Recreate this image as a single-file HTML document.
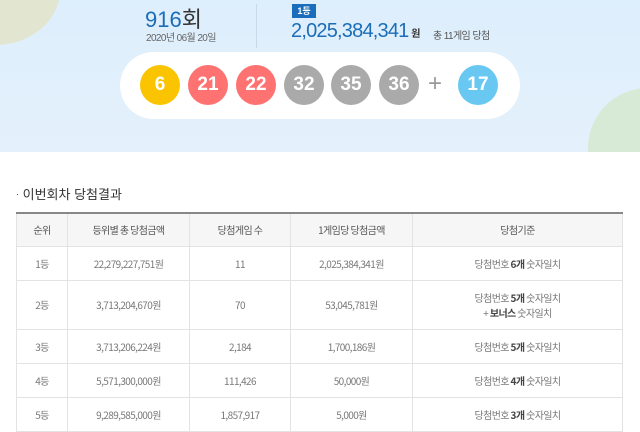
<!DOCTYPE html>
<html><head><meta charset="utf-8"><style>
*{margin:0;padding:0;box-sizing:border-box}
body{width:640px;height:428px;overflow:hidden;background:#fff;font-family:"Liberation Sans","Noto Sans CJK KR",sans-serif;position:relative}
.top{position:absolute;left:0;top:0;width:640px;height:152px;background:linear-gradient(#ddeefc,#e4f1fc);overflow:hidden}
.c1{position:absolute;left:-70px;top:-65px;width:130px;height:110px;border-radius:50%;background:#e2e5cf}
.c2{position:absolute;left:-40px;top:160px;width:55px;height:120px;border-radius:50%;background:#e2e5cf}
.c3{position:absolute;left:588px;top:88px;width:120px;height:120px;border-radius:50%;background:#d6ead6}
.abs{position:absolute;white-space:nowrap}
.ball{position:absolute;top:65px;width:40px;height:40px;border-radius:50%;color:#fff;font-weight:bold;font-size:19px;text-align:center;line-height:40px}
table{position:absolute;left:16px;top:212px;width:607px;border-collapse:collapse;font-size:10px;color:#777;letter-spacing:-0.6px;font-family:"Noto Sans CJK KR",sans-serif}
td,th{border:1px solid #e3e3e3;text-align:center;font-weight:normal;vertical-align:middle;line-height:15px}
th{background:#f6f6f6;height:33px;color:#555;border-top:2px solid #888}
td{height:34px}
b{color:#444}
</style></head><body>
<div class="top"><div class="c1"></div><div class="c2"></div><div class="c3"></div>
<div class="abs" style="left:145px;top:2px;font-size:22px;color:#1b6db8">916<span style="color:#333">회</span></div>
<div class="abs" style="left:146px;top:29px;font-size:10px;color:#666;letter-spacing:-0.6px">2020년 06월 20일</div>
<div style="position:absolute;left:256px;top:4px;width:1px;height:44px;background:#c9d9e8"></div>
<div class="abs" style="left:292px;top:4px;width:24px;height:14px;background:#1a6dbb;color:#fff;font-size:9px;text-align:center;line-height:14px;font-weight:bold">1등</div>
<div class="abs" style="left:291px;top:20px;font-size:20px;color:#1b6db8;letter-spacing:-0.8px">2,025,384,341<span style="font-size:10px;color:#333;font-weight:bold;letter-spacing:0"> 원</span></div>
<div class="abs" style="left:433px;top:27px;font-size:10px;color:#555;letter-spacing:-0.6px">총 11게임 당첨</div>
<div style="position:absolute;left:120px;top:52px;width:400px;height:67px;border-radius:34px;background:#fff"></div>
<div class="ball" style="left:140px;background:#fbc400">6</div>
<div class="ball" style="left:188px;background:#ff7272">21</div>
<div class="ball" style="left:236px;background:#ff7272">22</div>
<div class="ball" style="left:284px;background:#aaa">32</div>
<div class="ball" style="left:331px;background:#aaa">35</div>
<div class="ball" style="left:379px;background:#aaa">36</div>
<div class="abs" style="left:428px;top:70px;font-size:24px;color:#999">+</div>
<div class="ball" style="left:458px;background:#69c8f2">17</div>
</div>
<div class="abs" style="left:16px;top:184px;font-size:13px;color:#333"><span style="font-size:9px;vertical-align:2px">·</span> 이번회차 당첨결과</div>
<table>
<tr><th style="width:51px">순위</th><th style="width:122px">등위별 총 당첨금액</th><th style="width:101px">당첨게임 수</th><th style="width:122px">1게임당 당첨금액</th><th>당첨기준</th></tr>
<tr><td>1등</td><td>22,279,227,751원</td><td>11</td><td>2,025,384,341원</td><td>당첨번호 <b>6개</b> 숫자일치</td></tr>
<tr><td style="height:49px">2등</td><td>3,713,204,670원</td><td>70</td><td>53,045,781원</td><td>당첨번호 <b>5개</b> 숫자일치<br>+ <b>보너스</b> 숫자일치</td></tr>
<tr><td>3등</td><td>3,713,206,224원</td><td>2,184</td><td>1,700,186원</td><td>당첨번호 <b>5개</b> 숫자일치</td></tr>
<tr><td>4등</td><td>5,571,300,000원</td><td>111,426</td><td>50,000원</td><td>당첨번호 <b>4개</b> 숫자일치</td></tr>
<tr><td>5등</td><td>9,289,585,000원</td><td>1,857,917</td><td>5,000원</td><td>당첨번호 <b>3개</b> 숫자일치</td></tr>
</table>
</body></html>
